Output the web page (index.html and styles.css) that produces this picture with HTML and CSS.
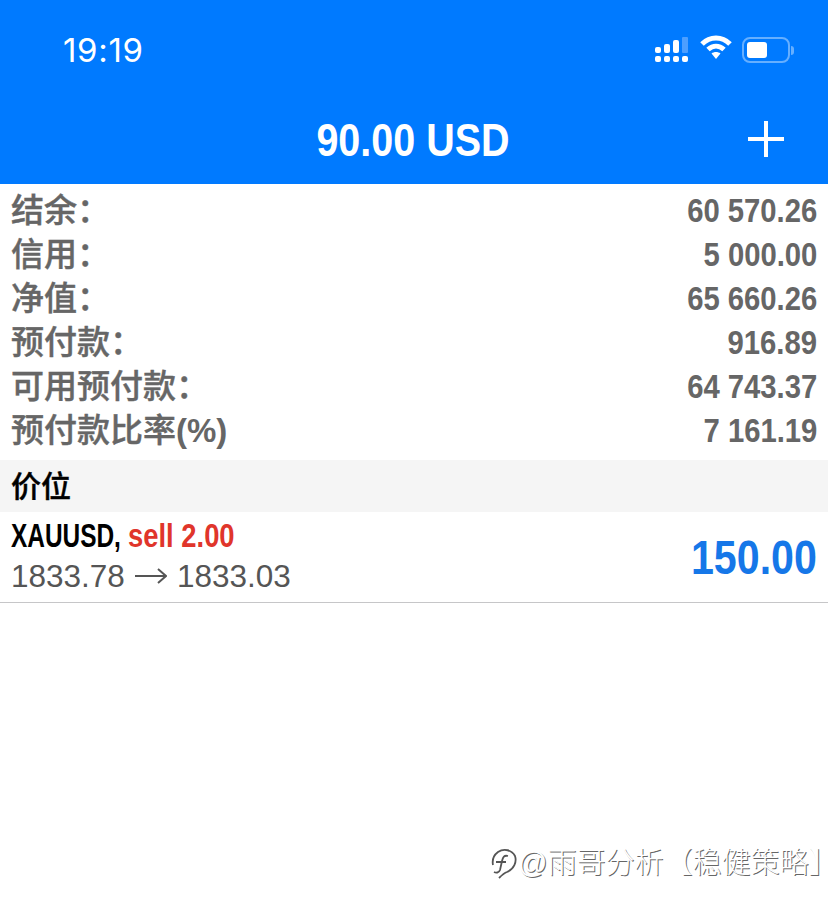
FILE: index.html
```html
<!DOCTYPE html>
<html lang="zh">
<head>
    <meta charset="UTF-8">
    <meta name="viewport" content="width=device-width, initial-scale=1.0">
    <title>交易</title>
    <link rel="stylesheet" href="styles.css">
</head>
<body>

    <div class="header">
        <div class="status-bar">
            <span class="time">19:19</span>
            <div class="status-icons">
                <svg class="signal" width="34" height="26" viewBox="0 0 34 26" fill="#fff">
                    <rect x="0" y="10" width="6" height="6" rx="2"/>
                    <rect x="9" y="7" width="6" height="9" rx="2"/>
                    <rect x="18" y="3" width="6" height="13" rx="2"/>
                    <rect x="27" y="0" width="6" height="16" rx="1" fill="#4d9fff"/>
                    <rect x="0" y="19" width="6" height="6" rx="2"/>
                    <rect x="9" y="19" width="6" height="6" rx="2"/>
                    <rect x="18" y="19" width="6" height="6" rx="2"/>
                    <rect x="27" y="19" width="6" height="6" rx="2"/>
                </svg>
                <svg class="wifi" width="32" height="24" viewBox="0 0 32 24" fill="none" stroke="#fff" stroke-width="5">
                    <path d="M2 9 C10 1 22 1 30 9"/>
                    <path d="M8 14.5 C13 10 19 10 24 14.5"/>
                    <path d="M11.5 18.5 L16 24 L20.5 18.5 C18 16.5 14 16.5 11.5 18.5 Z" fill="#fff" stroke="none"/>
                </svg>
                <div class="battery">
                    <div class="battery-level"></div>
                </div>
                <div class="battery-tip"></div>
            </div>
        </div>
        <div class="title-bar">
            <span class="title"><span class="narrow">90.00 USD</span></span>
            <svg class="plus" width="36" height="36" viewBox="0 0 36 36" fill="#fff">
                <rect x="0" y="16" width="36" height="4"/>
                <rect x="16" y="0" width="4" height="36"/>
            </svg>
        </div>
    </div>

    <div class="summary">
        <div class="row"><span class="label">结余：</span><span class="value"><span class="narrow-right">60 570.26</span></span></div>
        <div class="row"><span class="label">信用：</span><span class="value"><span class="narrow-right">5 000.00</span></span></div>
        <div class="row"><span class="label">净值：</span><span class="value"><span class="narrow-right">65 660.26</span></span></div>
        <div class="row"><span class="label">预付款：</span><span class="value"><span class="narrow-right">916.89</span></span></div>
        <div class="row"><span class="label">可用预付款：</span><span class="value"><span class="narrow-right">64 743.37</span></span></div>
        <div class="row"><span class="label">预付款比率<span class="percent">(%)</span></span><span class="value"><span class="narrow-right">7 161.19</span></span></div>
    </div>

    <div class="section-title">价位</div>

    <div class="position">
        <div class="position-info">
            <div class="position-name">
                <span class="symbol">XAUUSD,</span>
                <span class="sell">sell 2.00</span>
            </div>
            <div class="position-prices">
                <span>1833.78</span>
                <svg class="arrow" width="32" height="18" viewBox="0 0 32 18" fill="none" stroke="#555" stroke-width="2">
                    <path d="M0 9 H31 M23 2 L31 9 L23 16"/>
                </svg>
                <span>1833.03</span>
            </div>
        </div>
        <div class="profit"><span class="narrow-right">150.00</span></div>
    </div>

    <div class="watermark">
        <svg width="28" height="32" viewBox="0 0 28 32" fill="none" stroke="#555" stroke-width="1.8">
            <path d="M3 18 C2 13 4 8 8 5 C14 1 22 3 25 9 C27 15 24 22 17 25 C14 26 12 28 9 31"/>
            <path d="M18 9 C14 8 13 10 12 14 L10 23 C9 26 6 26 4 25 M6 15 H16"/>
        </svg>
        <span>@雨哥分析【稳健策略<span class="bracket-end">】</span></span>
    </div>

</body>
</html>
```

FILE: styles.css
```css
* {
    box-sizing: border-box;
    margin: 0;
    padding: 0;
}

body {
    font-family: 'Liberation Sans', 'Noto Sans CJK SC', sans-serif;
    background-color: #fff;
    width: 828px;
    height: 912px;
    overflow: hidden;
    position: relative;
}

.header {
    background-color: #007aff;
    height: 184px;
    color: #fff;
}

.status-bar {
    height: 96px;
    display: flex;
    justify-content: space-between;
    align-items: flex-start;
    padding: 32px 34px 0 63px;
}

.time {
    font-family: 'Inter', sans-serif;
    font-size: 33px;
    line-height: 36px;
    font-weight: 400;
    letter-spacing: 0.7px;
}

.status-icons {
    display: flex;
    align-items: center;
    height: 36px;
}

.signal {
    margin-right: 11px;
}

.wifi {
    margin-right: 10px;
    margin-top: -6px;
}

.battery {
    width: 48px;
    height: 26px;
    border: 2px solid #66afff;
    border-radius: 8px;
    padding: 3px;
    margin-top: -1px;
}

.battery-level {
    width: 20px;
    height: 16px;
    background-color: #fff;
    border-radius: 3px;
}

.battery-tip {
    width: 3px;
    height: 9px;
    background-color: #66afff;
    border-radius: 0 3px 3px 0;
    margin-left: 1px;
}

.title-bar {
    height: 88px;
    display: flex;
    justify-content: center;
    align-items: center;
    position: relative;
    padding-right: 2px;
}

.title {
    font-size: 47px;
    font-weight: 700;
    line-height: 88px;
}

.narrow {
    display: inline-block;
    transform: scaleX(0.84);
}

.narrow-right {
    display: inline-block;
    transform: scaleX(0.86);
    transform-origin: right center;
}

.plus {
    position: absolute;
    right: 44px;
    top: 25px;
}

.summary {
    padding: 4px 11px 8px 11px;
    color: #666;
}

.row {
    display: flex;
    justify-content: space-between;
    align-items: center;
    height: 44px;
}

.label {
    font-size: 33px;
    font-weight: 500;
    line-height: 44px;
    padding-top: 2px;
    white-space: nowrap;
    -webkit-text-stroke: 0.4px #666;
}

.percent {
    font-size: 33px;
    font-weight: 700;
    -webkit-text-stroke: 0;
}

.value {
    font-size: 34px;
    font-weight: 700;
    line-height: 44px;
    height: 44px;
}

.section-title {
    background-color: #f5f5f5;
    height: 52px;
    line-height: 54px;
    padding-left: 11px;
    font-size: 30px;
    font-weight: 500;
    color: #000;
    -webkit-text-stroke: 0.4px #000;
}

.position {
    height: 91px;
    border-bottom: 1px solid #c6c6c8;
    display: flex;
    justify-content: space-between;
    align-items: center;
    padding: 0 11px;
}

.position-info {
    margin-top: -5px;
}

.position-name {
    display: flex;
    font-size: 33px;
    font-weight: 700;
    line-height: 42px;
    white-space: nowrap;
}

.symbol {
    display: inline-block;
    color: #000;
    transform: scaleX(0.74);
    transform-origin: left center;
    margin-right: -32px;
}

.sell {
    display: inline-block;
    color: #e0352b;
    transform: scaleX(0.83);
    transform-origin: left center;
}

.position-prices {
    display: flex;
    align-items: center;
    gap: 10px;
    font-size: 31.5px;
    line-height: 38px;
    color: #555;
}

.profit {
    font-size: 49px;
    font-weight: 700;
    color: #1677e8;
}

.profit .narrow-right {
    transform: scaleX(0.84);
}

.watermark {
    position: absolute;
    left: 490px;
    top: 846px;
    display: flex;
    align-items: center;
    white-space: nowrap;
    color: #fff;
    font-size: 29px;
    font-weight: 300;
    line-height: 34px;
    text-shadow: 1px 1px 0 #666;
}

.bracket-end {
    font-feature-settings: "halt";
}
```
